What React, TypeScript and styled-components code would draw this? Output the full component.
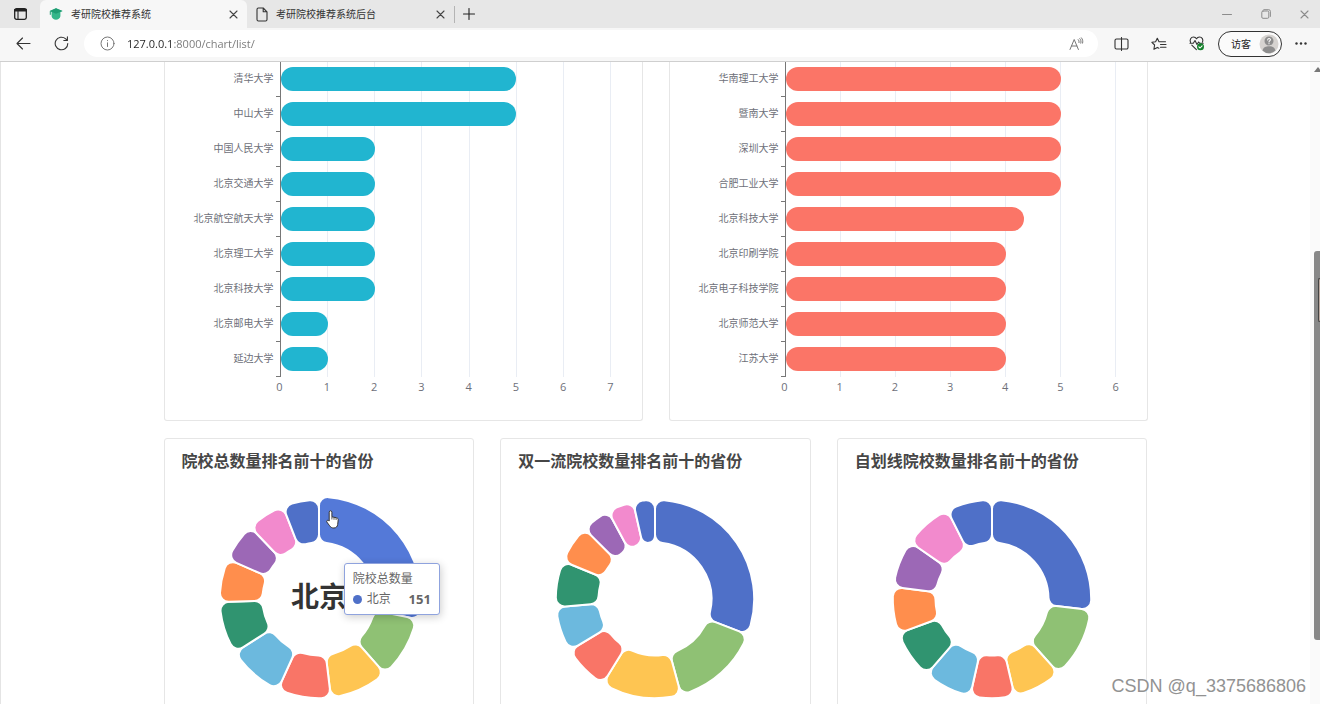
import React from "react";
import styled, { createGlobalStyle } from "styled-components";

const sans = `"Open Sans", "Noto Sans CJK SC", sans-serif`;

const GlobalStyle = createGlobalStyle`
  *, *::before, *::after { box-sizing: border-box; }
  body { margin: 0; background: #fff; font-family: ${sans}; }
  button { margin: 0; padding: 0; border: 0; background: none; font: inherit; color: inherit; cursor: pointer; }
  h2, ul, ol { margin: 0; padding: 0; list-style: none; }
  svg { display: block; flex: none; }
`;

const Browser = styled.div`
  position: relative;
  display: flex;
  flex-direction: column;
  height: 100vh;
  min-height: 480px;
  overflow: hidden;
`;

/* ---------- tab strip ---------- */

const TabStrip = styled.div`
  display: flex;
  align-items: stretch;
  height: 28px;
  flex: none;
  background: #e7e7e7;
  color: #3c3c3c;
`;

const StripButton = styled.button<{ $width: number }>`
  display: flex;
  align-items: center;
  justify-content: center;
  width: ${(p) => p.$width}px;
  color: #222;
`;

const Tab = styled.div<{ $active?: boolean }>`
  display: flex;
  align-items: center;
  width: 207px;
  padding: 0 9px;
  gap: 8px;
  border-radius: 6px 6px 0 0;
  background: ${(p) => (p.$active ? "#f7f7f7" : "transparent")};
`;

const TabLabel = styled.button`
  display: flex;
  flex: 1;
  align-items: center;
  gap: 8px;
  font-size: 10px;
  line-height: 16px;
  color: #333;
`;

const TabClose = styled.button`
  display: flex;
  color: #444;
`;

const TabDivider = styled.span`
  align-self: center;
  width: 1px;
  height: 17px;
  background: #b4b4b4;
`;

const WindowControls = styled.div`
  display: flex;
  margin-left: auto;
  margin-right: -4px;

  button { color: #8c8c8c; }
`;

/* ---------- toolbar ---------- */

const Toolbar = styled.div`
  display: flex;
  align-items: center;
  height: 34px;
  flex: none;
  padding: 0 0 2px 4px;
  background: #f7f7f7;
  border-bottom: 1px solid #cfcfcf;
`;

const ToolButton = styled.button`
  display: flex;
  align-items: center;
  justify-content: center;
  width: 38px;
  height: 28px;
  color: #333;
`;

const AddressBar = styled.label`
  display: flex;
  flex: 1;
  align-items: center;
  height: 27px;
  margin: 0 4px;
  padding: 0 14px 0 16px;
  gap: 12px;
  border-radius: 14px;
  background: #fff;
  color: #777;
`;

const AddressInput = styled.input`
  flex: 1;
  min-width: 0;
  padding: 0;
  border: 0;
  outline: 0;
  font-family: ${sans};
  font-size: 11px;
  line-height: 20px;
  color: transparent;
  background: linear-gradient(to right, #222 47px, #777 47px);
  background-clip: text;
  -webkit-background-clip: text;
`;

const GuestButton = styled.button`
  display: flex;
  align-items: center;
  justify-content: space-between;
  width: 64px;
  height: 26px;
  margin-left: 2px;
  padding: 0 2px 0 12px;
  border: 1px solid #333;
  border-radius: 13px;
  background: #fbfbfb;
  font-size: 10px;
  color: #222;
`;

/* ---------- page ---------- */

const Viewport = styled.div`
  display: flex;
  flex: 1;
  min-height: 0;
  border-left: 1px solid #e4e4e4;
`;

const Content = styled.main`
  flex: 1;
  min-width: 0;
  overflow: hidden;
  padding: 0 24px;
`;

const Dashboard = styled.div`
  display: flex;
  flex-direction: column;
  gap: 17px;
  max-width: 984px;
  margin: 0 auto;
`;

const CardRow = styled.div<{ $columns: number }>`
  display: grid;
  grid-template-columns: repeat(${(p) => p.$columns}, minmax(0, 1fr));
  gap: 26px;
`;

const Card = styled.section<{ $continued?: boolean }>`
  border: 1px solid #e6e6e6;
  border-top-width: ${(p) => (p.$continued ? 0 : 1)}px;
  border-radius: ${(p) => (p.$continued ? "0 0 3px 3px" : "3px")};
  background: #fff;
`;

const BarChartBody = styled.div`
  display: grid;
  grid-template-columns: 115px minmax(0, 1fr);
  padding: 0 31px 23px 0;
`;

const Categories = styled.ul`
  color: #6e7079;
  font-size: 10px;
`;

const Category = styled.li`
  position: relative;
  display: flex;
  align-items: center;
  justify-content: flex-end;
  height: 35px;
  padding: 0 6px 4px 0;
  white-space: nowrap;

  &::after {
    content: "";
    position: absolute;
    right: 0;
    bottom: 0;
    width: 4px;
    height: 1px;
    background: #777;
  }
`;

const Plot = styled.ul<{ $max: number }>`
  border-left: 1px solid #777;
  background: repeating-linear-gradient(
    to right,
    transparent 0,
    transparent calc(100% / ${(p) => p.$max} - 1px),
    #e9edf4 calc(100% / ${(p) => p.$max} - 1px),
    #e9edf4 calc(100% / ${(p) => p.$max})
  );
`;

const BarSlot = styled.li`
  display: flex;
  align-items: center;
  height: 35px;
  padding-bottom: 2px;
`;

const Bar = styled.div<{ $color: string }>`
  height: 24px;
  border-radius: 12px;
  background: ${(p) => p.$color};
`;

const Axis = styled.ol<{ $max: number }>`
  grid-column: 2;
  display: flex;
  margin: 0 calc(-50% / ${(p) => p.$max});
  color: #6e7079;
  font-size: 11px;
  line-height: 20px;

  li { flex: 1; text-align: center; }
`;

const DonutTitle = styled.h2`
  padding: 10px 17px 1px;
  font-size: 16px;
  line-height: 24px;
  font-weight: 700;
  color: #464646;
`;

const DonutArea = styled.div`
  position: relative;
  display: flex;
  justify-content: center;
  padding: 20px 0 40px;
`;

const Tooltip = styled.div`
  position: absolute;
  left: calc(50% + 25px);
  top: 89px;
  width: 96px;
  padding: 5px 8px;
  border: 1px solid #8fa3de;
  border-radius: 3px;
  background: #fff;
  box-shadow: 1px 2px 8px rgba(0, 0, 0, 0.2);
  font-size: 12px;
  line-height: 20px;
  color: #666;
`;

const TooltipRow = styled.div`
  display: flex;
  align-items: center;
  gap: 5px;

  i { width: 9px; height: 9px; border-radius: 50%; background: #4f70c8; }
  b { margin-left: auto; font-size: 13px; }
`;

const Pointer = styled.svg`
  position: absolute;
  left: calc(50% + 7px);
  top: 36px;
`;

const ScrollTrack = styled.div`
  position: relative;
  display: flex;
  flex-direction: column;
  align-items: flex-end;
  width: 10px;
  flex: none;
  padding-top: 5px;
  background: #fafafa;
`;

const ScrollThumb = styled.div`
  width: 6px;
  height: 61%;
  margin-top: 179px;
  border-radius: 3px 0 0 3px;
  background: #888;
`;

const SidebarHandle = styled.div`
  position: absolute;
  right: 0;
  top: 216px;
  width: 2px;
  height: 44px;
  border: 1px solid #444;
  border-right: 0;
  border-radius: 2px 0 0 2px;
  background: #b9a79d;
`;

const Watermark = styled.div`
  position: absolute;
  right: 14px;
  bottom: 7px;
  font-family: "Liberation Sans", sans-serif;
  font-size: 18px;
  line-height: 22px;
  color: #929292;
  text-shadow: -1px -1px 0 #fff;
`;

/* ---------- data ---------- */

type Datum = [string, number];

const leftBars: Datum[] = [
  ["清华大学", 5], ["中山大学", 5], ["中国人民大学", 2], ["北京交通大学", 2], ["北京航空航天大学", 2],
  ["北京理工大学", 2], ["北京科技大学", 2], ["北京邮电大学", 1], ["延边大学", 1],
];

const rightBars: Datum[] = [
  ["华南理工大学", 5], ["暨南大学", 5], ["深圳大学", 5], ["合肥工业大学", 5], ["北京科技大学", 4.33],
  ["北京印刷学院", 4], ["北京电子科技学院", 4], ["北京师范大学", 4], ["江苏大学", 4],
];

const palette = ["#4f70c8", "#8fc174", "#fec552", "#f97567", "#6cb9de", "#309470", "#ff8e4d", "#9c68b6", "#f28acd", "#4f70c8"];

/* Angles, clockwise from twelve o'clock, at which each slice ends. */
const totalAngles = [101.6, 138.6, 173.1, 204.4, 237.6, 268.2, 293.6, 316.4, 338.7, 360];
const doubleFirstAngles = [111, 164.8, 211.6, 238.9, 265.3, 292.3, 314.9, 331.9, 347.3, 360];
const ownLineAngles = [96.3, 138.1, 166.9, 192.7, 221, 249.8, 277, 304.8, 333.3, 360];

/* Ring segment between two angles with rounded corners. */
function slicePath(startDeg: number, endDeg: number, inner: number, outer: number, corner: number) {
  const start = (startDeg * Math.PI) / 180;
  const end = (endDeg * Math.PI) / 180;
  const s = Math.sin(Math.min((end - start) / 2, Math.PI / 2));
  const co = Math.min(corner, ((outer * s) / (1 + s)) * 0.99);
  const ci = Math.min(corner, s < 1 ? ((inner * s) / (1 - s)) * 0.99 : corner);
  const ao = Math.asin(co / (outer - co));
  const ai = Math.asin(ci / (inner + ci));
  const lo = Math.sqrt((outer - co) ** 2 - co ** 2);
  const li = Math.sqrt((inner + ci) ** 2 - ci ** 2);
  const at = (a: number, r: number) => `${(r * Math.sin(a)).toFixed(2)} ${(-r * Math.cos(a)).toFixed(2)}`;
  const largeOuter = end - start - 2 * ao > Math.PI ? 1 : 0;
  const largeInner = end - start - 2 * ai > Math.PI ? 1 : 0;
  return [
    `M${at(start, lo)}`,
    `A${co} ${co} 0 0 1 ${at(start + ao, outer)}`,
    `A${outer} ${outer} 0 ${largeOuter} 1 ${at(end - ao, outer)}`,
    `A${co} ${co} 0 0 1 ${at(end, lo)}`,
    `L${at(end, li)}`,
    `A${ci} ${ci} 0 0 1 ${at(end - ai, inner)}`,
    `A${inner} ${inner} 0 ${largeInner} 0 ${at(start + ai, inner)}`,
    `A${ci} ${ci} 0 0 1 ${at(start, li)}`,
    "Z",
  ].join("");
}

/* ---------- charts ---------- */

function BarChart({ data, max, color }: { data: Datum[]; max: number; color: string }) {
  return (
    <Card $continued>
      <BarChartBody>
        <Categories>
          {data.map(([name]) => <Category key={name}>{name}</Category>)}
        </Categories>
        <Plot $max={max}>
          {data.map(([name, value]) => (
            <BarSlot key={name}>
              <Bar $color={color} style={{ width: `${(value / max) * 100}%` }} />
            </BarSlot>
          ))}
        </Plot>
        <Axis $max={max}>
          {Array.from({ length: max + 1 }, (_, i) => <li key={i}>{i}</li>)}
        </Axis>
      </BarChartBody>
    </Card>
  );
}

function Donut({ title, ends, active, children }: {
  title: string; ends: number[]; active?: string; children?: React.ReactNode;
}) {
  return (
    <Card>
      <DonutTitle>{title}</DonutTitle>
      <DonutArea>
        <svg width="210" height="210" viewBox="-105 -105 210 210" role="img" aria-label={title}>
          {ends.map((end, i) => {
            const lifted = Boolean(active) && i === 0;
            return (
              <path
                key={i}
                d={slicePath(i ? ends[i - 1] : 0, end, 56.5, lifted ? 102.3 : 99.2, 8.6)}
                fill={lifted ? "#5479d8" : palette[i]}
                stroke="#fff"
                strokeWidth="2"
              />
            );
          })}
          {active && (
            <text y="8" textAnchor="middle" fontSize="28" fontWeight="700" fill="#333">{active}</text>
          )}
        </svg>
        {children}
      </DonutArea>
    </Card>
  );
}

/* ---------- icons ---------- */

const line = { fill: "none", stroke: "currentColor", strokeWidth: 1.1, strokeLinecap: "round", strokeLinejoin: "round" } as const;

const CloseIcon = () => (
  <svg width="9" height="9" viewBox="0 0 9 9" {...line}><path d="M1 1l7 7M8 1l-7 7" /></svg>
);

export default function App() {
  return (
    <Browser>
      <GlobalStyle />
      <TabStrip>
        <StripButton $width={40} aria-label="标签页操作">
          <svg width="13" height="12" viewBox="0 0 13 12" {...line}>
            <rect x=".7" y=".7" width="11.6" height="10.6" rx="1.8" strokeWidth="1.3" />
            <path d="M1 2.2h11" strokeWidth="2.6" /><path d="M4 3v8" />
          </svg>
        </StripButton>
        <Tab $active>
          <TabLabel>
            <svg width="14" height="12" viewBox="0 0 14 12">
              <path d="M7 .3L13.500 3 11.400 4v4.200C11 10.400 9 11.700 7 11.700S3 10.400 2.600 8.200V4L.8 3z" fill="#35b68a" />
              <path d="M7 .3L13.500 3 7 5.800.8 3z" fill="#1f9d73" />
              <path d="M1.300 3.200v3.600" stroke="#1f9d73" />
            </svg>
            考研院校推荐系统
          </TabLabel>
          <TabClose aria-label="关闭标签页"><CloseIcon /></TabClose>
        </Tab>
        <Tab>
          <TabLabel>
            <svg width="12" height="15" viewBox="0 0 12 15" {...line}>
              <path d="M2.400 1h4.800L11 4.800v7.800A1.400 1.400 0 0 1 9.600 14H2.400A1.400 1.400 0 0 1 1 12.600V2.400A1.400 1.400 0 0 1 2.400 1zM7.200 1v3.800H11" />
            </svg>
            考研院校推荐系统后台
          </TabLabel>
          <TabClose aria-label="关闭标签页"><CloseIcon /></TabClose>
        </Tab>
        <TabDivider />
        <StripButton $width={28} aria-label="新建标签页">
          <svg width="12" height="12" viewBox="0 0 12 12" {...line}><path d="M6 .5v11M.5 6h11" /></svg>
        </StripButton>
        <WindowControls>
          <StripButton $width={39} aria-label="最小化">
            <svg width="10" height="10" viewBox="0 0 10 10" {...line} strokeWidth="1"><path d="M.5 5.500h9" /></svg>
          </StripButton>
          <StripButton $width={39} aria-label="还原">
            <svg width="10" height="10" viewBox="0 0 10 10" {...line} strokeWidth="1">
              <rect x=".8" y="2" width="7" height="7.300" rx="1.200" /><path d="M2.800.7h4.900A1.700 1.700 0 0 1 9.400 2.400v5" />
            </svg>
          </StripButton>
          <StripButton $width={39} aria-label="关闭"><CloseIcon /></StripButton>
        </WindowControls>
      </TabStrip>

      <Toolbar>
        <ToolButton aria-label="返回">
          <svg width="15" height="13" viewBox="0 0 15 13" {...line}><path d="M14 6.500H1M6.500 1L1 6.500 6.500 12" /></svg>
        </ToolButton>
        <ToolButton aria-label="刷新">
          <svg width="15" height="15" viewBox="0 0 15 15" {...line}>
            <path d="M13.800 7.500A6.300 6.300 0 1 1 11.700 2.800L13.300 4.400M13.400.9v3.600H9.800" />
          </svg>
        </ToolButton>
        <AddressBar>
          <svg width="15" height="15" viewBox="0 0 15 15" {...line} strokeWidth="1">
            <circle cx="7.500" cy="7.500" r="6.500" /><path d="M7.500 6.800v3.700M7.500 4.500v.2" />
          </svg>
          <AddressInput aria-label="地址" defaultValue="127.0.0.1:8000/chart/list/" />
          <svg width="15" height="14" viewBox="0 0 15 14" {...line} strokeWidth="1">
            <path d="M1 12.500L5.200 2.500l4.200 10M2.500 9h5.400M9.200 2.600c.8.800 1 1.900.8 3M10.800 1.600c1.200 1.200 1.500 2.900 1 4.600M12.400.8c1.300 1.500 1.700 3.400 1.200 5.300" />
          </svg>
        </AddressBar>
        <ToolButton aria-label="分屏">
          <svg width="15" height="14" viewBox="0 0 15 14" {...line}>
            <path d="M5.500 2H2.500A1.500 1.500 0 0 0 1 3.500v7A1.500 1.500 0 0 0 2.500 12h3M9.500 2h3A1.500 1.500 0 0 1 14 3.500v7a1.500 1.500 0 0 1-1.500 1.500h-3M5.500 2h4M5.500 12h4M7.500.5v13" />
          </svg>
        </ToolButton>
        <ToolButton aria-label="收藏夹">
          <svg width="16" height="14" viewBox="0 0 16 14" {...line}>
            <path d="M9 4.800H8L6.300 1.200 4.600 4.800.9 5.300l2.700 2.700-.7 4.300 3.500-1.900 1.500.8M9 4.800h5.500M9.500 7.500H15M9.500 10.300H15" />
          </svg>
        </ToolButton>
        <ToolButton aria-label="浏览器概要">
          <svg width="16" height="15" viewBox="0 0 16 15" {...line}>
            <path d="M1.500 6.200C.4 3.800 1.900 1 4.500 1 6 1 7 1.900 7.500 2.800 8 1.900 9 1 10.500 1c2.500 0 4.100 2.600 3 5M1 7.200h3.300L6 4.500l2 4 1.600-2.500 1 1.200h3.600M2.800 9.200l4.600 4.400" />
            <circle cx="11.500" cy="10.800" r="3.500" fill="#14802b" stroke="none" />
            <path d="M9.900 10.900l1.200 1.100 2-2.200" stroke="#fff" />
          </svg>
        </ToolButton>
        <GuestButton>
          访客
          <svg width="20" height="20" viewBox="0 0 20 20">
            <circle cx="10" cy="10" r="9.500" fill="#d6d3d0" />
            <path d="M3.500 16.500c1-3.600 3.600-4.300 6.500-4.300s5.500.7 6.500 4.300A9.300 9.300 0 0 1 10 19.300a9.300 9.300 0 0 1-6.500-2.800z" fill="#8d8d8d" />
            <circle cx="10" cy="7" r="4.500" fill="#8d8d8d" />
            <path d="M8.700 6c0-2 2.800-1.800 2.700-.2C11.300 6.900 10 7 10 8M10 9.500v.2" fill="none" stroke="#fff" strokeWidth="1.100" strokeLinecap="round" />
          </svg>
        </GuestButton>
        <ToolButton aria-label="设置及其他">
          <svg width="12" height="3" viewBox="0 0 12 3" fill="#333">
            <circle cx="1.500" cy="1.500" r="1.200" /><circle cx="6" cy="1.500" r="1.200" /><circle cx="10.500" cy="1.500" r="1.200" />
          </svg>
        </ToolButton>
      </Toolbar>

      <Viewport>
        <Content>
          <Dashboard>
            <CardRow $columns={2}>
              <BarChart data={leftBars} max={7} color="#21b5d0" />
              <BarChart data={rightBars} max={6} color="#fb7567" />
            </CardRow>
            <CardRow $columns={3}>
              <Donut title="院校总数量排名前十的省份" ends={totalAngles} active="北京">
                <Pointer width="13" height="19" viewBox="0 0 13 19" aria-hidden="true">
                  <path
                    d="M3.200 11V2.200c0-1.900 2.700-1.900 2.700 0v4.600l4.700 1c1.200.3 1.700 1 1.600 2.200l-.5 4.500c-.3 2-1.500 3.500-3.800 3.500-2 0-3.300-.7-4.300-2.300L.8 12c-.6-1.300.8-2.200 1.700-1.400z"
                    fill="#fff" stroke="#333" strokeWidth="1"
                  />
                  <path d="M5.900 7v2.500M8 7.500v2.300M10.100 8v2" stroke="#333" strokeWidth=".8" />
                </Pointer>
                <Tooltip role="tooltip">
                  院校总数量
                  <TooltipRow><i />北京<b>151</b></TooltipRow>
                </Tooltip>
              </Donut>
              <Donut title="双一流院校数量排名前十的省份" ends={doubleFirstAngles} />
              <Donut title="自划线院校数量排名前十的省份" ends={ownLineAngles} />
            </CardRow>
          </Dashboard>
        </Content>
        <ScrollTrack>
          <svg width="6" height="5" viewBox="0 0 6 5"><path d="M0 5L4 0l4 5z" fill="#777" /></svg>
          <ScrollThumb />
          <SidebarHandle />
        </ScrollTrack>
      </Viewport>
      <Watermark>CSDN @q_3375686806</Watermark>
    </Browser>
  );
}
